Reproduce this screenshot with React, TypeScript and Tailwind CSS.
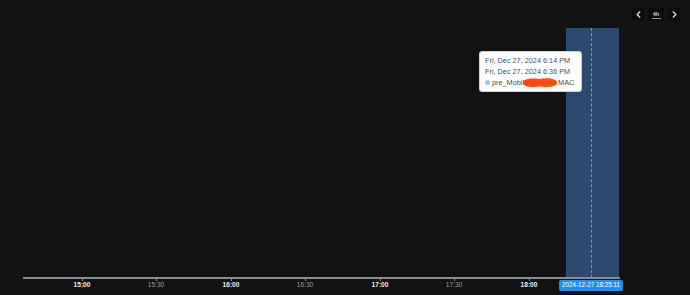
import { ChevronLeft, ChevronRight } from "lucide-react";

const ticks = [
  { x: 82, label: "15:00", major: true },
  { x: 156, label: "15:30", major: false },
  { x: 231, label: "16:00", major: true },
  { x: 305, label: "16:30", major: false },
  { x: 380, label: "17:00", major: true },
  { x: 454, label: "17:30", major: false },
  { x: 529, label: "18:00", major: true },
];

function Controls() {
  return (
    <div className="absolute left-[632px] top-[8px] flex items-center gap-[4px]">
      <button className="flex h-[13px] w-[12px] items-center justify-center rounded-[2px] bg-[#0b0b0b] text-[#e5e5e5]">
        <ChevronLeft size={11} strokeWidth={2.5} />
      </button>
      <button className="flex h-[13px] w-[16px] flex-col items-center justify-center rounded-[2px] bg-[#0b0b0b]">
        <span className="text-[5.5px] font-bold leading-[6px] text-[#cfcfcf]">4h</span>
        <span className="mt-[1px] h-[1px] w-[9px] bg-[#9a9a9a]" />
      </button>
      <button className="flex h-[13px] w-[12px] items-center justify-center rounded-[2px] bg-[#0b0b0b] text-[#e5e5e5]">
        <ChevronRight size={11} strokeWidth={2.5} />
      </button>
    </div>
  );
}

export default function App() {
  return (
    <div
      className="relative h-[295px] w-[690px] overflow-hidden whitespace-nowrap bg-[#121212]"
      style={{ fontFamily: '"Liberation Sans", Arial, sans-serif' }}
    >
      <Controls />

      {/* selected bar */}
      <div className="absolute left-[566px] top-[28px] h-[250px] w-[53px] bg-[#2c4a70]">
        <div className="absolute left-[25px] top-0 h-full w-0 border-l border-dashed border-[#7f9bbd]" />
      </div>

      {/* axis */}
      <div className="absolute left-[23px] top-[277px] h-[2px] w-[597px] bg-[#8a8d92]" />
      {ticks.map((t) => (
        <div key={t.label}>
          <div
            className="absolute top-[277px] h-[4px] w-[1px] bg-[#8a8d92]"
            style={{ left: t.x }}
          />
          <div
            className={`absolute top-[280px] w-[40px] -translate-x-1/2 text-center text-[6.6px] leading-[10px] ${
              t.major ? "font-bold text-[#f0f0f0]" : "text-[#a0a0a0]"
            }`}
            style={{ left: t.x }}
          >
            {t.label}
          </div>
        </div>
      ))}

      {/* cursor badge */}
      <div className="absolute left-[559px] top-[280px] flex h-[11px] w-[64px] items-center justify-center rounded-[2px] bg-[#1e90f0] text-[6.3px] leading-none text-white">
        2024-12-27 18:25:11
      </div>

      {/* tooltip */}
      <div className="absolute left-[479px] top-[51px] flex h-[41px] w-[103px] flex-col justify-center rounded-[3px] border border-[#d0d0d0] bg-white pl-[5px] text-[7.3px] leading-[11px] text-[#4d4d4d]">
        <div>Fri, Dec 27, 2024 6:14 PM</div>
        <div>Fri, Dec 27, 2024 6:36 PM</div>
        <div className="flex items-center">
          <span className="mr-[2px] h-[5px] w-[5px] rounded-full bg-[#9cc3f0]" />
          <span>pre_Mobil</span>
          <svg width="36" height="11" viewBox="0 0 36 11" className="-ml-[2px]">
            <path
              d="M1 6 C1 1.5 10 1 17 2 C24 0.5 34 1 35 5 C36 10 26 10.5 18 9.5 C10 10.5 1 10 1 6 Z"
              fill="#ff4a0a"
            />
          </svg>
          <span>MAC</span>
        </div>
      </div>
    </div>
  );
}
